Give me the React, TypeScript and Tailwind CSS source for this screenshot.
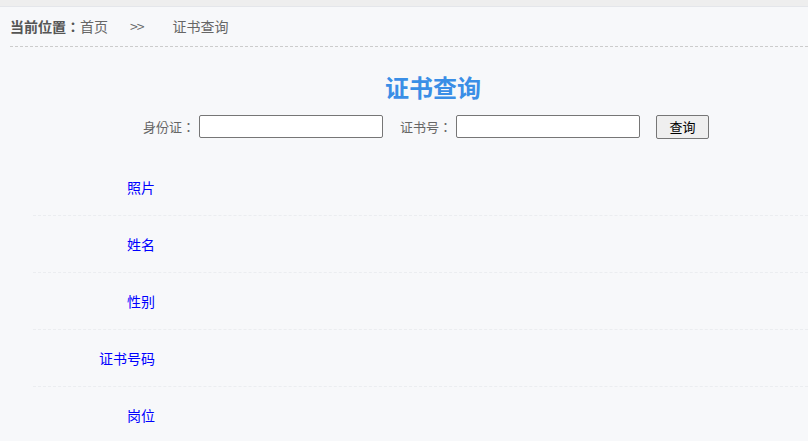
const fields = ["照片", "姓名", "性别", "证书号码", "岗位"];

const jp = { fontFamily: '"Noto Sans CJK JP", "Noto Sans CJK SC", sans-serif' };

export default function App() {
  return (
    <div
      className="min-h-[441px] w-[808px] overflow-hidden bg-[#f7f8fa]"
      style={{ fontFamily: '"Noto Sans CJK SC", "Noto Sans", sans-serif' }}
    >
      <div className="h-[7px] border-b border-[#e4e6ea] bg-[#eeeeee]" />

      {/* breadcrumb */}
      <div className="ml-[10px] flex h-[40px] items-center border-b border-dashed border-[#cccccc] text-[14px] text-[#666]">
        <span className="font-bold text-[#555]" style={jp}>当前位置：</span>
        <span>首页</span>
        <span className="ml-[22px] text-[14px] tracking-[-1px]">&gt;&gt;</span>
        <span className="ml-[29px]">证书查询</span>
      </div>

      {/* title */}
      <h1 className="ml-[385px] mt-[24px] h-[32px] text-[24px] font-bold leading-[32px] text-[#3a8ee6]">
        证书查询
      </h1>

      {/* search form */}
      <div className="ml-[143px] mt-[11px] flex h-[25px] items-center text-[13px] text-[#666]">
        <span className="w-[56px]" style={jp}>身份证：</span>
        <input className="h-[23px] w-[184px] rounded-[2px] border border-[#767676] bg-white px-1 outline-none" />
        <span className="ml-[17px] w-[56px]" style={jp}>证书号：</span>
        <input className="h-[23px] w-[184px] rounded-[2px] border border-[#767676] bg-white px-1 outline-none" />
        <button className="ml-[16px] h-[24px] w-[53px] rounded-[2px] border border-[#767676] bg-[#efefef] text-[13px] text-black">
          查询
        </button>
      </div>

      {/* result table */}
      <div className="ml-[33px] mt-[20px]">
        {fields.map((f) => (
          <div
            key={f}
            className="flex h-[57px] items-center border-b border-dashed border-[#ebedf0]"
          >
            <div className="w-[122px] text-right text-[14px] text-[#0000ff]">{f}</div>
            <div className="flex-1" />
          </div>
        ))}
      </div>
    </div>
  );
}
